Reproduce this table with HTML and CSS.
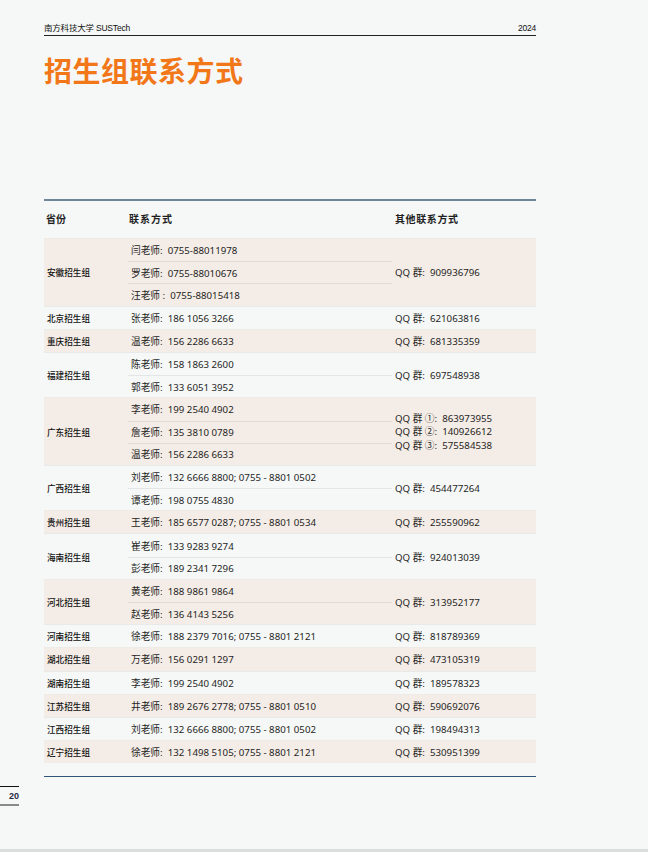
FILE: index.html
```html
<!DOCTYPE html>
<html lang="zh-CN">
<head>
<meta charset="utf-8">
<title>招生组联系方式</title>
<link rel="stylesheet" href="styles.css">
</head>
<body>
<div class="page">
  <header class="runhead">
    <span class="brand">南方科技大学 SUSTech</span>
    <span class="year">2024</span>
  </header>
  <h1 class="title">招生组联系方式</h1>

  <div class="table">
    <div class="thead">
      <div class="c1">省份</div>
      <div class="c2">联系方式</div>
      <div class="c3">其他联系方式</div>
    </div>

    <div class="group alt">
      <div class="prov">安徽招生组</div>
      <div class="contacts">
        <div class="sub">闫老师:  0755-88011978</div>
        <div class="sub">罗老师:  0755-88010676</div>
        <div class="sub">汪老师 :  0755-88015418</div>
      </div>
      <div class="other">QQ 群:  909936796</div>
    </div>

    <div class="group">
      <div class="prov">北京招生组</div>
      <div class="contacts"><div class="sub">张老师:  186 1056 3266</div></div>
      <div class="other">QQ 群:  621063816</div>
    </div>

    <div class="group alt">
      <div class="prov">重庆招生组</div>
      <div class="contacts"><div class="sub">温老师:  156 2286 6633</div></div>
      <div class="other">QQ 群:  681335359</div>
    </div>

    <div class="group">
      <div class="prov">福建招生组</div>
      <div class="contacts">
        <div class="sub">陈老师:  158 1863 2600</div>
        <div class="sub">郭老师:  133 6051 3952</div>
      </div>
      <div class="other">QQ 群:  697548938</div>
    </div>

    <div class="group alt">
      <div class="prov">广东招生组</div>
      <div class="contacts">
        <div class="sub">李老师:  199 2540 4902</div>
        <div class="sub">詹老师:  135 3810 0789</div>
        <div class="sub">温老师:  156 2286 6633</div>
      </div>
      <div class="other multi">
        <div>QQ 群 ①:  863973955</div>
        <div>QQ 群 ②:  140926612</div>
        <div>QQ 群 ③:  575584538</div>
      </div>
    </div>

    <div class="group">
      <div class="prov">广西招生组</div>
      <div class="contacts">
        <div class="sub">刘老师:  132 6666 8800; 0755 - 8801 0502</div>
        <div class="sub">谭老师:  198 0755 4830</div>
      </div>
      <div class="other">QQ 群:  454477264</div>
    </div>

    <div class="group alt">
      <div class="prov">贵州招生组</div>
      <div class="contacts"><div class="sub">王老师:  185 6577 0287; 0755 - 8801 0534</div></div>
      <div class="other">QQ 群:  255590962</div>
    </div>

    <div class="group">
      <div class="prov">海南招生组</div>
      <div class="contacts">
        <div class="sub">崔老师:  133 9283 9274</div>
        <div class="sub">彭老师:  189 2341 7296</div>
      </div>
      <div class="other">QQ 群:  924013039</div>
    </div>

    <div class="group alt">
      <div class="prov">河北招生组</div>
      <div class="contacts">
        <div class="sub">黄老师:  188 9861 9864</div>
        <div class="sub">赵老师:  136 4143 5256</div>
      </div>
      <div class="other">QQ 群:  313952177</div>
    </div>

    <div class="group">
      <div class="prov">河南招生组</div>
      <div class="contacts"><div class="sub">徐老师:  188 2379 7016; 0755 - 8801 2121</div></div>
      <div class="other">QQ 群:  818789369</div>
    </div>

    <div class="group alt">
      <div class="prov">湖北招生组</div>
      <div class="contacts"><div class="sub">万老师:  156 0291 1297</div></div>
      <div class="other">QQ 群:  473105319</div>
    </div>

    <div class="group">
      <div class="prov">湖南招生组</div>
      <div class="contacts"><div class="sub">李老师:  199 2540 4902</div></div>
      <div class="other">QQ 群:  189578323</div>
    </div>

    <div class="group alt">
      <div class="prov">江苏招生组</div>
      <div class="contacts"><div class="sub">井老师:  189 2676 2778; 0755 - 8801 0510</div></div>
      <div class="other">QQ 群:  590692076</div>
    </div>

    <div class="group">
      <div class="prov">江西招生组</div>
      <div class="contacts"><div class="sub">刘老师:  132 6666 8800; 0755 - 8801 0502</div></div>
      <div class="other">QQ 群:  198494313</div>
    </div>

    <div class="group alt">
      <div class="prov">辽宁招生组</div>
      <div class="contacts"><div class="sub">徐老师:  132 1498 5105; 0755 - 8801 2121</div></div>
      <div class="other">QQ 群:  530951399</div>
    </div>
  </div>

  <div class="folio">20</div>
</div>
</body>
</html>
```

FILE: styles.css
```css
html {
  background: #dcdedd;
  margin: 0;
}
body {
  margin: 0;
  height: 849px;
  overflow: hidden;
  background: #f6f8f7;
  font-family: "Noto Sans", "Noto Sans CJK SC", sans-serif;
  color: #1f1f1f;
}
.page {
  width: 492px;
  padding-left: 44px;
}
.runhead {
  display: flex;
  justify-content: space-between;
  align-items: flex-end;
  padding-top: 23px;
  padding-bottom: 2px;
  border-bottom: 1.5px solid #222;
  font-size: 8.5px;
  line-height: 10px;
  font-family: "Liberation Sans", "Noto Sans CJK SC", sans-serif;
  letter-spacing: -0.2px;
  color: #111;
}
.title {
  margin: 17px 0 0;
  font-family: "Noto Sans CJK SC", sans-serif;
  font-size: 28px;
  line-height: 34px;
  font-weight: 700;
  color: #f27718;
  letter-spacing: 0.5px;
}
.table {
  margin-top: 112px;
  border-top: 2px solid #6f8699;
  border-bottom: 1.5px solid #2f5677;
  padding-bottom: 13px;
  font-size: 9.7px;
}
.thead {
  display: grid;
  grid-template-columns: 84px 264px 1fr;
  height: 37px;
  box-sizing: border-box;
  padding-bottom: 3px;
  align-items: center;
  font-family: "Noto Sans CJK SC", sans-serif;
  font-weight: 700;
  font-size: 10px;
}
.thead > div {
  padding-left: 2px;
}
.thead .c2 { padding-left: 1px; letter-spacing: 1px; }
.thead .c3 { padding-left: 3px; letter-spacing: 0.6px; }
.group {
  display: grid;
  grid-template-columns: 84px 264px 1fr;
  border-top: 1px solid #e8eae9;
}
.group.alt {
  background: #f4ece6;
  border-top-color: #eeeae6;
}
.prov {
  display: flex;
  align-items: center;
  padding-left: 3px;
  font-family: "Noto Sans CJK SC", sans-serif;
  font-size: 8.6px;
  font-weight: 500;
  color: #111;
}
.contacts {
  display: flex;
  flex-direction: column;
}
.sub {
  height: 22.2px;
  box-sizing: border-box;
  display: flex;
  align-items: center;
  padding-left: 3px;
  white-space: pre;
}
.sub + .sub {
  border-top: 1px solid rgba(0, 0, 0, 0.07);
}
.other {
  display: flex;
  align-items: center;
  padding-left: 3px;
  white-space: pre;
}
.other.multi {
  flex-direction: column;
  align-items: flex-start;
  justify-content: center;
  line-height: 13.5px;
  padding-top: 1px;
}
.folio {
  margin-top: 9px;
  margin-left: -44px;
  width: 19px;
  box-sizing: border-box;
  border-top: 1px solid #111;
  border-bottom: 2px solid #8a8a8a;
  padding: 4px 0 2px 0;
  text-align: right;
  font-family: "Liberation Sans", sans-serif;
  font-size: 9px;
  line-height: 11px;
  font-weight: 700;
  color: #1e2a44;
}
```
